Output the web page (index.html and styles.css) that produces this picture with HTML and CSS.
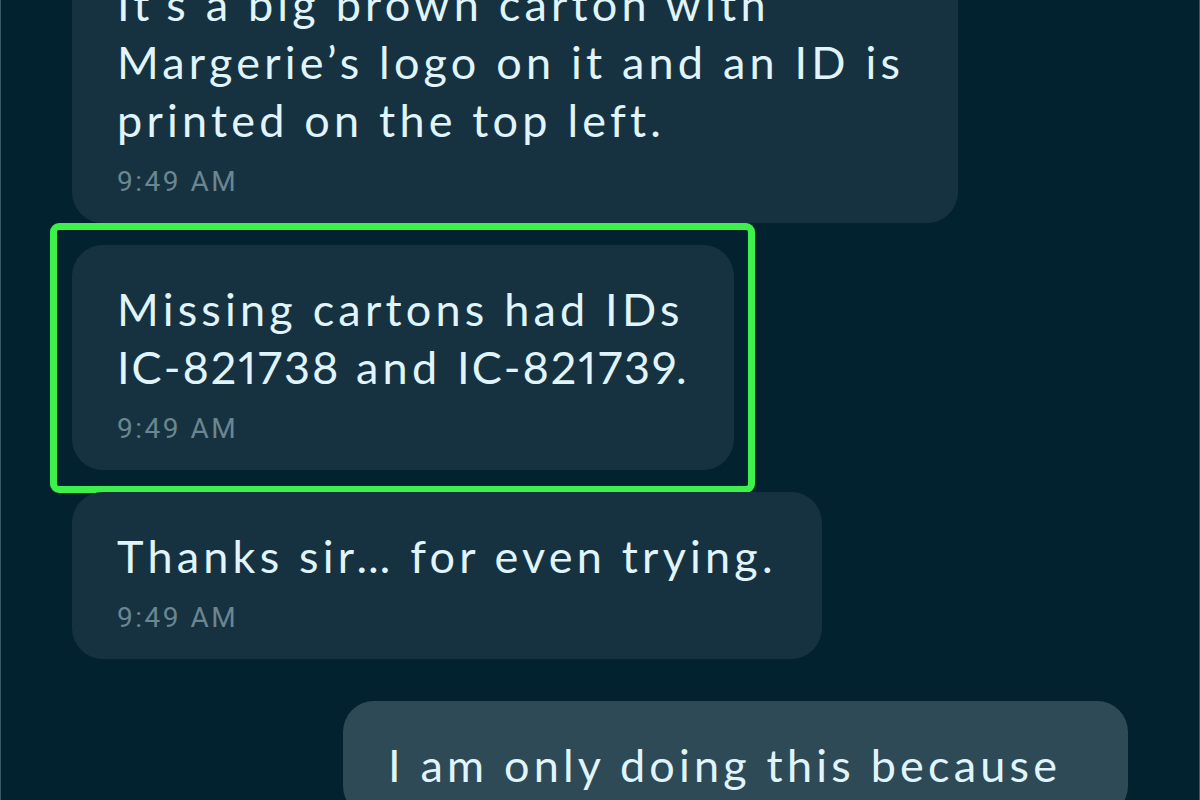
FILE: index.html
```html
<!DOCTYPE html>
<html lang="en">
<head>
<meta charset="utf-8">
<title>Chat</title>
<link rel="stylesheet" href="styles.css">
</head>
<body>
<div class="screen">
  <div class="chat">
    <div class="msg in wide">
      <p class="text">It’s a big brown carton with<br>Margerie’s logo on it and an ID is<br>printed on the top left.</p>
      <span class="time">9:49 AM</span>
    </div>
    <div class="msg in highlighted">
      <p class="text">Missing cartons had IDs<br><span class="num">IC-821738</span> and <span class="num">IC-821739.</span></p>
      <span class="time">9:49 AM</span>
    </div>
    <div class="msg in">
      <p class="text">Thanks sir… for even trying.</p>
      <span class="time">9:49 AM</span>
    </div>
    <div class="msg out">
      <p class="text">I am only doing this because</p>
    </div>
  </div>
</div>
</body>
</html>
```

FILE: styles.css
```css
html, body {
  margin: 0;
  padding: 0;
  height: 100%;
  background: #03222f;
  overflow: hidden;
}

.screen {
  height: 800px;
  overflow: hidden;
  border-left: 1px solid #3b5a68;
  border-right: 1px solid #3b5a68;
  box-sizing: border-box;
  font-family: "Lato", "Noto Sans", sans-serif;
}

.chat {
  display: flex;
  flex-direction: column;
  align-items: flex-start;
  gap: 22px;
  margin-top: -60px;
  padding: 0 71px;
}

.msg {
  position: relative;
  box-sizing: border-box;
  border-radius: 31px;
  padding: 35px 45px 23px;
  display: flex;
  flex-direction: column;
}

.msg.in {
  background: #163241;
}

.msg.wide {
  width: 886px;
}

.msg.out {
  background: #2d4a56;
  align-self: flex-end;
  width: 785px;
  margin-top: 20px;
}

.text {
  margin: 0;
  color: #e0f5fb;
  font-size: 45px;
  line-height: 58px;
  letter-spacing: 4.2px;
  white-space: nowrap;
  font-variant-numeric: proportional-nums;
}

.num {
  letter-spacing: 2px;
}

.time {
  margin-top: 15px;
  color: #6a8690;
  font-family: "Roboto", "Noto Sans", sans-serif;
  font-size: 28px;
  line-height: 36px;
  letter-spacing: 2.5px;
}

.msg.highlighted::after {
  content: "";
  position: absolute;
  top: -22px;
  left: -22px;
  right: -21px;
  bottom: -23px;
  border: 7px solid #3ef04b;
  border-radius: 9px;
  pointer-events: none;
}
```
